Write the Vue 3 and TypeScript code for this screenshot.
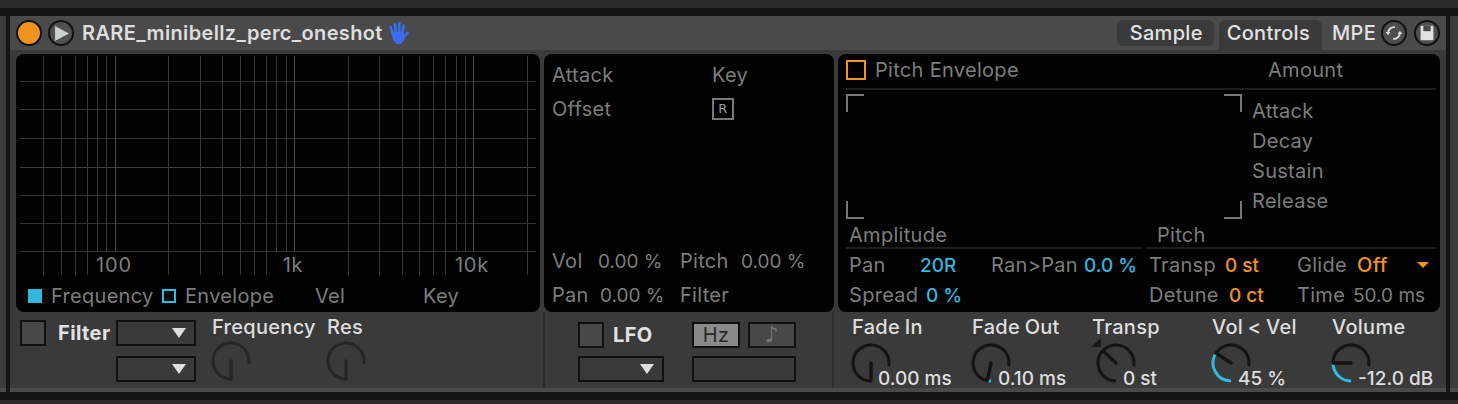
<template>
  <div class="page">
    <div class="strip-top"></div>
    <div class="strip-dark"></div>
    <div class="track">
      <div class="gutter-left"></div>
      <div class="rule"></div>
      <div class="device">
        <header class="titlebar">
          <span class="round power"></span>
          <span class="round play">
            <svg viewBox="0 0 24 24" width="22" height="22"><path d="M5.5 4.4 L20.7 12.5 L5.5 20.7 Z" fill="#c9d0c9" /></svg>
          </span>
          <span class="device-name">RARE_minibellz_perc_oneshot</span>
          <svg class="hand" viewBox="0 0 22 24" width="22" height="24">
            <g stroke="#3a6df0" stroke-width="2.6" stroke-linecap="round" fill="none">
              <path d="M6 14 L3.6 6" />
              <path d="M9 12 L8 3" />
              <path d="M12.2 12 L12.4 2.4" />
              <path d="M15 13 L16.6 4.6" />
              <path d="M16 17 L20.4 12" />
            </g>
            <path d="M5 11 L17 11 L17.5 18 L14 23 L9 23 L5.5 18 Z" fill="#3a6df0" />
          </svg>
          <div class="tabs">
            <span class="tab sample">Sample</span>
            <span class="tab active">Controls</span>
            <span class="tab plain">MPE</span>
            <span class="round small-icon sync">
              <svg viewBox="0 0 24 24" width="22" height="22" fill="none" stroke="#ddd" stroke-width="2">
                <path d="M5.6 12 A6.5 6.5 0 0 1 13 5.6" />
                <path d="M18.4 12 A6.5 6.5 0 0 1 11 18.4" />
                <path d="M3 11 L8 11 L5.5 14.5 Z" fill="#ddd" stroke="none" />
                <path d="M16 13 L21 13 L18.5 9.5 Z" fill="#ddd" stroke="none" />
              </svg>
            </span>
            <span class="round small-icon">
              <svg viewBox="0 0 24 24" width="22" height="22"><path d="M5 5.5 Q5 4 6.5 4 L17.5 4 Q19 4 19 5.5 L19 19 Q19 20 18 20 L6 20 Q5 20 5 19 Z" fill="#e2e2e2" /><rect x="8" y="4" width="8" height="6" fill="#4a4a4a" /></svg>
            </span>
          </div>
        </header>

        <section class="screens">
          <div class="screen filter-screen">
            <svg class="graph" width="524" height="226" viewBox="0 0 524 226">
              <line v-for="y in gridRows" :key="'h' + y" x1="4" x2="520" :y1="y" :y2="y" :stroke="y === 113.5 ? '#404040' : '#323232'" />
              <line v-for="l in gridCols" :key="'v' + l.x" :x1="l.x" :x2="l.x" y1="2" :y2="l.short ? 197 : 221" :stroke="l.major ? '#4a4a4a' : '#363636'" />
              <text x="98" y="218" text-anchor="middle" class="graph-label">100</text>
              <text x="277" y="218" text-anchor="middle" class="graph-label">1k</text>
              <text x="456" y="218" text-anchor="middle" class="graph-label">10k</text>
            </svg>
            <div class="legend">
              <span class="sq filled"></span><span class="leg-freq">Frequency</span>
              <span class="sq"></span><span class="leg-env">Envelope</span>
              <span class="leg-vel">Vel</span>
              <span>Key</span>
            </div>
          </div>

          <div class="screen mod-screen">
            <div class="mod-top">
              <span>Attack</span><span>Key</span>
              <span>Offset</span><span class="r-box">R</span>
            </div>
            <div class="mod-bottom">
              <div class="mod-row vol"><span>Vol</span><span class="num">0.00 %</span><span>Pitch</span><span class="num">0.00 %</span></div>
              <div class="mod-row pan"><span>Pan</span><span class="num">0.00 %</span><span>Filter</span></div>
            </div>
          </div>

          <div class="screen env-screen">
            <div class="env-head">
              <span class="orange-box"></span>
              <span class="env-title">Pitch Envelope</span>
              <span>Amount</span>
            </div>
            <div class="env-body">
              <div class="env-frame">
                <i class="corner tl"></i><i class="corner tr"></i>
                <i class="corner bl"></i><i class="corner br"></i>
              </div>
              <div class="adsr">
                <span v-for="s in adsr" :key="s">{{ s }}</span>
              </div>
            </div>
            <div class="env-params">
              <div class="amp-col">
                <div class="sub-head">Amplitude</div>
                <div class="amp-row one"><span>Pan</span><b class="blue num">20R</b><span>Ran&gt;Pan</span><b class="blue num">0.0 %</b></div>
                <div class="amp-row two"><span>Spread</span><b class="blue num">0 %</b></div>
              </div>
              <div class="pitch-col">
                <div class="sub-head">Pitch</div>
                <div class="pitch-row one"><span>Transp</span><b class="orange num">0 st</b><span>Glide</span><b class="orange">Off</b><i class="caret"></i></div>
                <div class="pitch-row two"><span>Detune</span><b class="orange num">0 ct</b><span>Time</span><span class="num">50.0 ms</span></div>
              </div>
            </div>
          </div>
        </section>

        <section class="controls">
          <div class="ctl-filter">
            <span class="check"></span>
            <span class="ctl-title">Filter</span>
            <div class="menus">
              <span class="menu"><i class="menu-caret"></i></span>
              <span class="menu"><i class="menu-caret"></i></span>
            </div>
            <div v-for="k in filterKnobs" :key="k.name" class="knob-cell filter-cell">
              <span class="knob-title">{{ k.name }}</span>
              <svg class="knob" width="40" height="40" viewBox="0 0 40 40">
                <path :d="arc(180, 460)" class="track-arc dim" />
                <line x1="20" y1="20" x2="20" y2="38" class="pointer dim" />
              </svg>
            </div>
          </div>

          <div class="ctl-lfo">
            <div class="lfo-row">
              <span class="check"></span>
              <span class="ctl-title">LFO</span>
              <span class="btn on">Hz</span>
              <span class="btn note">♪</span>
            </div>
            <div class="lfo-row">
              <span class="menu lfo-menu"><i class="menu-caret"></i></span>
              <span class="menu rate"></span>
            </div>
          </div>

          <div class="ctl-knobs">
            <div v-for="k in knobs" :key="k.name" class="knob-cell">
              <span class="knob-title">{{ k.name }}</span>
              <div class="knob-line" :class="{ shifted: k.bipolar }">
                <svg class="knob" width="40" height="40" viewBox="0 0 40 40">
                  <path v-if="k.angle > 180 && !k.bipolar" :d="arc(180, k.angle)" class="value-arc" />
                  <path :d="k.bipolar ? arc(180, 460) : arc(k.angle, 460)" class="track-arc" />
                  <line x1="20" y1="20" :x2="pt(k.angle, 18).x" :y2="pt(k.angle, 18).y" class="pointer" />
                  <path v-if="k.bipolar" d="M-5 4 L5 -5 L5 4 Z" fill="#1a1a1a" />
                </svg>
                <span class="knob-value">{{ k.value }}</span>
              </div>
            </div>
          </div>
        </section>
        <div class="foot"></div>
      </div>
      <div class="rule"></div>
      <div class="gutter-right"></div>
    </div>
    <div class="strip-dark"></div>
    <div class="strip-bottom"></div>
  </div>
</template>

<script setup lang="ts">
interface Knob {
  name: string
  value: string
  angle: number
  bipolar?: boolean
}

const R = 18

const pt = (deg: number, r: number) => {
  const a = (deg * Math.PI) / 180
  return { x: 20 + r * Math.sin(a), y: 20 - r * Math.cos(a) }
}

const arc = (from: number, to: number) => {
  const s = pt(from, R)
  const e = pt(to, R)
  const large = to - from > 180 ? 1 : 0
  return `M${s.x} ${s.y} A${R} ${R} 0 ${large} 1 ${e.x} ${e.y}`
}

// log frequency scale, 179px per decade, 100Hz at x=98 inside the screen
const freqX = (hz: number) => 98.5 + Math.log10(hz / 100) * 179.3
const freqs = [40, 50, 60, 70, 80, 90, 100, 200, 300, 400, 500, 600, 700, 800, 900, 1000, 2000, 3000, 4000, 5000, 6000, 7000, 8000, 9000, 10000, 20000]
const labelled = [80, 90, 100, 800, 900, 1000, 8000, 9000, 10000]
const gridCols = freqs.map((f) => ({
  x: Math.round(freqX(f)) + 0.5,
  major: f === 100 || f === 1000 || f === 10000,
  short: labelled.includes(f),
}))
const gridRows = [27, 55, 84, 113, 141, 169, 197].map((y) => y + 0.5)

const adsr = ['Attack', 'Decay', 'Sustain', 'Release']

const filterKnobs = [{ name: 'Frequency' }, { name: 'Res' }]

const knobs: Knob[] = [
  { name: 'Fade In', value: '0.00 ms', angle: 180 },
  { name: 'Fade Out', value: '0.10 ms', angle: 192 },
  { name: 'Transp', value: '0 st', angle: 313, bipolar: true },
  { name: 'Vol < Vel', value: '45 %', angle: 303 },
  { name: 'Volume', value: '-12.0 dB', angle: 270 },
]
</script>

<style scoped>
.page {
  width: 1458px;
  height: 404px;
  display: flex;
  flex-direction: column;
  overflow: hidden;
  background: #2b2b2b;
  font-family: Inter, "Liberation Sans", sans-serif;
  font-size: 20px;
  letter-spacing: 0.3px;
  color: #7d7d7d;
}
.strip-top { height: 8px; background: #2b2b2b; }
.strip-bottom { height: 4px; background: #2b2b2b; }
.strip-dark { height: 8px; background: #141514; }
.track { display: flex; height: 376px; }
.gutter-left { width: 6px; background: #3c3c3c; border-bottom: 4px solid #4a4a4a; }
.gutter-right { width: 8px; background: #3c3c3c; border-bottom: 4px solid #4a4a4a; }
.rule { width: 4px; background: #141514; }
.device { width: 1436px; display: flex; flex-direction: column; background: #3a3a3a; }

.titlebar {
  height: 34px;
  display: flex;
  align-items: center;
  padding: 0 6px;
  background: #4a4a4a;
}
.round {
  width: 26px;
  height: 26px;
  box-sizing: border-box;
  border-radius: 50%;
  border: 2px solid #111;
  display: flex;
  align-items: center;
  justify-content: center;
  flex: none;
}
.power { background: #f0941f; }
.play { margin-left: 6px; background: #505050; }
.device-name {
  margin-left: 8px;
  font-weight: 600;
  letter-spacing: 0.35px;
  color: #dedede;
}
.hand { margin-left: 4px; }
.tabs { margin-left: auto; display: flex; align-items: flex-start; height: 34px; padding-top: 4px; box-sizing: border-box; }
.tab {
  height: 26px;
  line-height: 26px;
  color: #e2e2e2;
  font-weight: 500;
  background: #3a3a3a;
  border-radius: 6px;
}
.tab.sample { padding: 0 11px 0 13px; }
.tab.active {
  height: 30px;
  margin-left: 5px;
  border-radius: 6px 6px 0 0;
  padding: 0 12px 0 8px;
}
.tab.plain { background: none; padding: 0 0 0 10px; }
.small-icon { margin-left: 7px; background: #4e4e4e; }
.small-icon.sync { margin-left: 5px; }

.screens {
  display: grid;
  grid-template-columns: 524px 290px 602px;
  column-gap: 4px;
  padding: 4px 6px 0;
  height: 262px;
  box-sizing: border-box;
  background: #3a3a3a;
}
.screen { background: #020202; border-radius: 8px; overflow: hidden; }
.num { font-size: 19px; letter-spacing: 0; }

.filter-screen { display: flex; flex-direction: column; }
.graph { display: block; flex: none; }
.graph-label { fill: #7d7d7d; font-size: 20px; letter-spacing: 0.8px; }
.legend {
  height: 32px;
  display: flex;
  align-items: center;
  padding-left: 12px;
}
.sq {
  width: 14px;
  height: 14px;
  box-sizing: border-box;
  border: 2px solid #2fb8e0;
  flex: none;
}
.sq.filled { background: #2fb8e0; }
.leg-freq { width: 120px; padding-left: 9px; box-sizing: border-box; }
.leg-env { width: 139px; padding-left: 9px; box-sizing: border-box; }
.leg-vel { width: 108px; }

.mod-screen { display: flex; flex-direction: column; justify-content: space-between; padding: 4px 0 0 8px; }
.mod-top {
  display: grid;
  grid-template-columns: 160px 1fr;
  grid-auto-rows: 34px;
  align-items: center;
}
.r-box {
  width: 22px;
  height: 22px;
  box-sizing: border-box;
  border: 2px solid #777;
  font-size: 13px;
  line-height: 18px;
  text-align: center;
  font-family: "DejaVu Sans", sans-serif;
  color: #999;
}
.mod-row { display: grid; height: 34px; align-items: center; }
.mod-row.vol { grid-template-columns: 46px 82px 61px auto; }
.mod-row.pan { grid-template-columns: 48px 80px 61px auto; }

.env-screen { display: flex; flex-direction: column; padding: 0 4px 0 8px; }
.env-head {
  height: 32px;
  padding-bottom: 2px;
  flex: none;
  display: flex;
  align-items: center;
  border-bottom: 2px solid #1e1e1e;
}
.orange-box {
  width: 20px;
  height: 20px;
  box-sizing: border-box;
  border: 2px solid #f0941f;
  flex: none;
}
.env-title { margin-left: 9px; width: 393px; }
.env-body { display: flex; height: 136px; flex: none; }
.env-frame {
  width: 396px;
  height: 125px;
  margin-top: 4px;
  display: grid;
  grid-template-columns: 18px 18px;
  justify-content: space-between;
  align-content: space-between;
}
.corner { width: 18px; height: 18px; box-sizing: border-box; border: 0 solid #777; display: block; }
.tl { border-top-width: 2px; border-left-width: 2px; }
.tr { border-top-width: 2px; border-right-width: 2px; }
.bl { border-bottom-width: 2px; border-left-width: 2px; }
.br { border-bottom-width: 2px; border-right-width: 2px; }
.adsr {
  margin-left: 10px;
  display: grid;
  grid-auto-rows: 30px;
  align-content: start;
  align-items: center;
  padding-top: 6px;
}
.env-params { display: grid; grid-template-columns: 296px 290px; column-gap: 4px; }
.sub-head { height: 21px; line-height: 18px; padding-left: 3px; border-bottom: 2px solid #1e1e1e; }
.pitch-col .sub-head { padding-left: 11px; }
.env-params b { font-weight: 500; }
.blue { color: #2fb8e0; }
.orange { color: #f0941f; }
.amp-row, .pitch-row { display: grid; height: 30px; align-items: center; padding-left: 3px; }
.amp-row.one { margin-top: 1px; grid-template-columns: 71px 71px 93px auto; }
.amp-row.two { grid-template-columns: 77px auto; }
.pitch-row.one { margin-top: 1px; grid-template-columns: 76px 72px 60px 60px auto; }
.pitch-row.two { grid-template-columns: 80px 68px 56px auto; }
.caret {
  width: 0;
  height: 0;
  border-left: 6px solid transparent;
  border-right: 6px solid transparent;
  border-top: 6px solid #f0941f;
}

.controls { display: flex; height: 76px; background: #3a3a3a; }
.ctl-filter {
  width: 533px;
  flex: none;
  box-sizing: border-box;
  display: flex;
  padding: 8px 0 0 10px;
}
.check {
  width: 26px;
  height: 26px;
  flex: none;
  box-sizing: border-box;
  border: 2px solid #111;
  background: #484848;
}
.ctl-title { font-weight: 700; letter-spacing: 0.4px; color: #e2e2e2; }
.ctl-filter .ctl-title { margin-left: 12px; width: 58px; line-height: 26px; }
.menus { display: grid; grid-auto-rows: 26px; row-gap: 10px; }
.menu {
  width: 80px;
  height: 26px;
  box-sizing: border-box;
  border: 2px solid #111;
  display: flex;
  align-items: center;
  justify-content: flex-end;
  padding-right: 8px;
}
.menu-caret {
  width: 0;
  height: 0;
  border-left: 7px solid transparent;
  border-right: 7px solid transparent;
  border-top: 10px solid #dedede;
}
.knob-cell { display: flex; flex-direction: column; }
.filter-cell { margin: -3px 0 0 16px; width: 99px; }
.knob-title { height: 20px; line-height: 20px; font-weight: 500; word-spacing: -1px; color: #dedede; white-space: nowrap; }
.knob { display: block; flex: none; overflow: visible; margin-top: 6px; margin-left: -1px; }
.filter-cell .knob { margin-top: 4px; }
.track-arc { fill: none; stroke: #141414; stroke-width: 3; }
.track-arc.dim { stroke: #262626; }
.value-arc { fill: none; stroke: #2fb8e0; stroke-width: 3; }
.pointer { stroke: #141414; stroke-width: 3.4; stroke-linecap: round; }
.pointer.dim { stroke: #262626; }

.ctl-lfo {
  width: 291px;
  flex: none;
  box-sizing: border-box;
  border-left: 2px solid #2c2c2c;
  border-right: 2px solid #2c2c2c;
  padding: 10px 0 0 33px;
  display: grid;
  grid-auto-rows: 26px;
  row-gap: 8px;
}
.lfo-row { display: flex; align-items: center; }
.ctl-lfo .ctl-title { margin-left: 9px; width: 79px; flex: none; }
.btn {
  width: 48px;
  height: 26px;
  box-sizing: border-box;
  border: 2px solid #111;
  text-align: center;
  line-height: 22px;
  background: #484848;
  color: #6a6a6a;
  flex: none;
}
.btn.on { background: #8a8a8a; color: #2a2a2a; }
.btn.note { margin-left: 8px; font-family: "DejaVu Sans", sans-serif; font-size: 22px; color: #787878; }
.lfo-menu { width: 86px; flex: none; }
.rate { width: 104px; margin-left: 28px; flex: none; }

.ctl-knobs {
  flex: 1;
  display: grid;
  grid-template-columns: repeat(4, 120px) 100px;
  padding: 5px 0 0 18px;
}
.knob-line { display: flex; }
.knob-line.shifted { padding-left: 5px; }
.knob-value {
  margin-left: -13px;
  margin-top: 32px;
  height: 20px;
  line-height: 20px;
  font-size: 19px;
  font-weight: 500;
  letter-spacing: 0;
  color: #dedede;
  white-space: nowrap;
}
.foot { height: 4px; background: #4a4a4a; }
</style>

<style>
html, body { margin: 0; background: #2b2b2b; }
</style>
